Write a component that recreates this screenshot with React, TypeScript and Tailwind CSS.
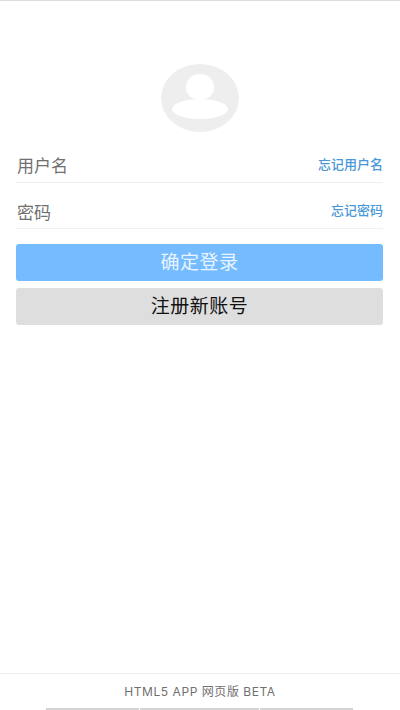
const cjk = "font-['Noto_Sans_CJK_SC','Liberation_Sans',sans-serif]";

function Avatar() {
  return (
    <svg width="78" height="68" viewBox="0 0 78 68" className="ml-px block">
      <ellipse cx="39" cy="34" rx="39" ry="34" fill="#eeeeee" />
      <ellipse cx="39" cy="23" rx="14" ry="13" fill="#ffffff" />
      <ellipse cx="39" cy="45" rx="28" ry="10" fill="#ffffff" />
    </svg>
  );
}

export default function App() {
  return (
    <div className={`${cjk} flex h-[710px] w-[400px] flex-col overflow-hidden bg-white`}>
      <div className="h-px bg-[#dddddd]" />

      <main className="flex flex-1 flex-col pl-4 pr-[17px]">
        <div className="mt-[63px] flex justify-center">
          <Avatar />
        </div>

        <div className="mt-[18px] flex h-[33px] items-center justify-between border-b border-[#f0f0f0] pl-px">
          <span className="-mt-[2px] text-[17px] text-[#707070]">用户名</span>
          <a className="-mt-[5px] text-[13px] font-medium text-[#4a98d8]">忘记用户名</a>
        </div>
        <div className="mt-[13px] flex h-[33px] items-center justify-between border-b border-[#f0f0f0] pl-px">
          <span className="text-[17px] text-[#707070]">密码</span>
          <a className="-mt-[5px] text-[13px] font-medium text-[#4a98d8]">忘记密码</a>
        </div>

        <button className="mt-[15px] h-[37px] rounded-[3px] bg-[#74bbff] pb-[2px] text-[19px] tracking-[0.5px] text-[#e8f4ff]">
          确定登录
        </button>
        <button className="mt-[7px] h-[37px] rounded-[3px] bg-[#dedede] pb-[2px] text-[19px] tracking-[0.5px] text-[#111111]">
          注册新账号
        </button>
      </main>

      <footer className="flex h-[37px] flex-col border-t border-[#eeeeee]">
        <div className="flex flex-1 items-center justify-center pt-[2px] font-['Inter','Noto_Sans_CJK_SC',sans-serif] text-[12px] tracking-[0.55px] text-[#707070]">
          HTML5 APP 网页版 BETA
        </div>
        <div className="flex h-[2px] gap-px pl-[46px]">
          <div className="w-[93px] bg-[#d4d4d4]" />
          <div className="w-[119px] bg-[#d4d4d4]" />
          <div className="w-[93px] bg-[#d4d4d4]" />
        </div>
      </footer>
    </div>
  );
}
